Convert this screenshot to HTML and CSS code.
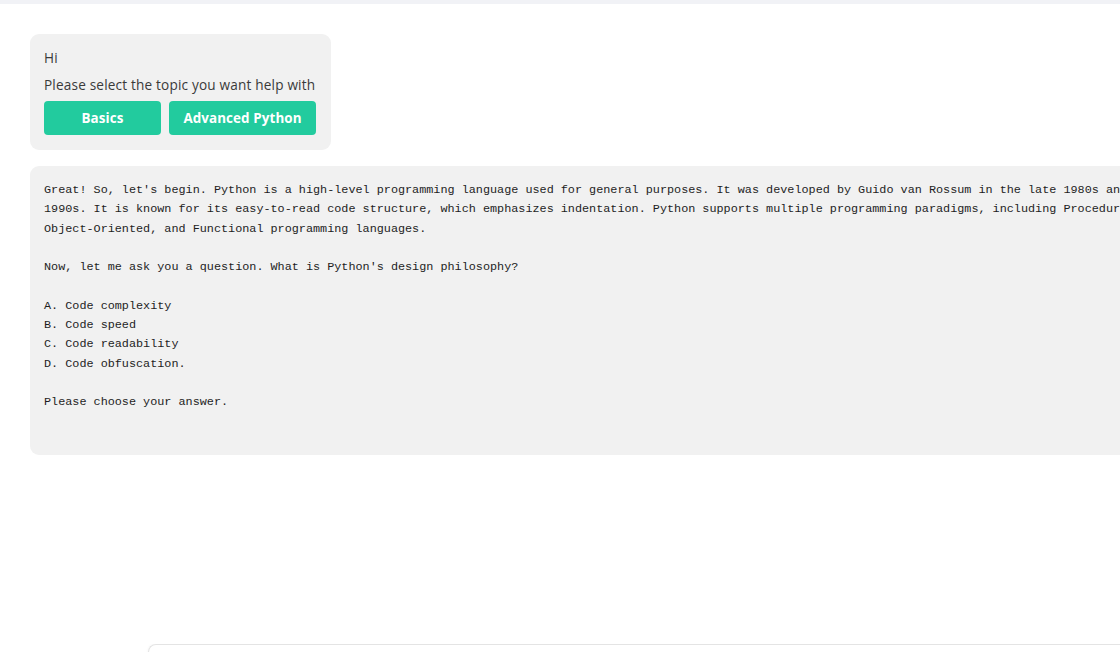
FILE: index.html
```html
<!DOCTYPE html>
<html>
<head>
<meta charset="utf-8">
<link rel="stylesheet" href="styles.css">
</head>
<body>
<div class="topbar"></div>
<div class="page">
  <main class="chat">
    <div class="bubble">
      <p class="line hi">Hi</p>
      <p class="line">Please select the topic you want help with</p>
      <div class="choices">
        <button class="choice basics">Basics</button>
        <button class="choice adv">Advanced Python</button>
      </div>
    </div>
    <div class="answer"><pre class="mono">Great! So, let's begin. Python is a high-level programming language used for general purposes. It was developed by Guido van Rossum in the late 1980s and early
1990s. It is known for its easy-to-read code structure, which emphasizes indentation. Python supports multiple programming paradigms, including Procedural,
Object-Oriented, and Functional programming languages.

Now, let me ask you a question. What is Python's design philosophy?

A. Code complexity
B. Code speed
C. Code readability
D. Code obfuscation.

Please choose your answer.</pre></div>
  </main>
  <footer class="footer">
    <div class="inputbox"></div>
  </footer>
</div>
</body>
</html>
```

FILE: styles.css
```css
html, body {
  margin: 0;
  padding: 0;
  background: #ffffff;
  overflow: hidden;
}
body {
  width: 1120px;
  height: 652px;
  display: flex;
  flex-direction: column;
}
.topbar {
  height: 4px;
  background: #f1f2f6;
  flex: none;
}
.page {
  flex: 1;
  display: flex;
  flex-direction: column;
  min-height: 0;
}
.chat {
  flex: 1;
  padding: 30px 0 0 30px;
  display: flex;
  flex-direction: column;
  align-items: flex-start;
  gap: 16px;
}
.bubble {
  background: #f1f1f1;
  border-radius: 9px;
  width: 301px;
  height: 116px;
  box-sizing: border-box;
  padding: 14px 14px 14px 14px;
  font-family: "Open Sans", "Noto Sans", sans-serif;
  color: #3a3a3a;
  font-size: 13.6px;
  letter-spacing: 0.18px;
  white-space: nowrap;
}
.line {
  margin: 0;
  line-height: 19px;
  height: 19px;
}
.hi {
  margin-bottom: 8px;
}
.choices {
  display: flex;
  gap: 8px;
  margin-top: 7px;
}
.choice {
  background: #22cb9e;
  color: #ffffff;
  border: none;
  border-radius: 4px;
  height: 34px;
  font-family: "Open Sans", "Noto Sans", sans-serif;
  font-weight: 700;
  font-size: 13.4px;
  letter-spacing: 0.1px;
  padding: 0;
}
.basics { width: 117px; }
.adv { width: 147px; }
.answer {
  background: #f1f1f1;
  border-radius: 9px;
  width: 1180px;
  height: 289px;
  box-sizing: border-box;
  padding: 15px 14px 0 14px;
  flex: none;
}
.mono {
  margin: 0;
  font-family: "Liberation Mono", "DejaVu Sans Mono", monospace;
  font-size: 11.8px;
  line-height: 19.3px;
  color: #1e1e1e;
  white-space: pre;
}
.footer {
  flex: none;
  height: 8px;
  padding-left: 148px;
  overflow: hidden;
}
.inputbox {
  height: 40px;
  border: 1px solid #e4e4e4;
  border-right: none;
  border-radius: 8px 0 0 8px;
  box-shadow: 0 0 3px rgba(0,0,0,0.05);
}
```
